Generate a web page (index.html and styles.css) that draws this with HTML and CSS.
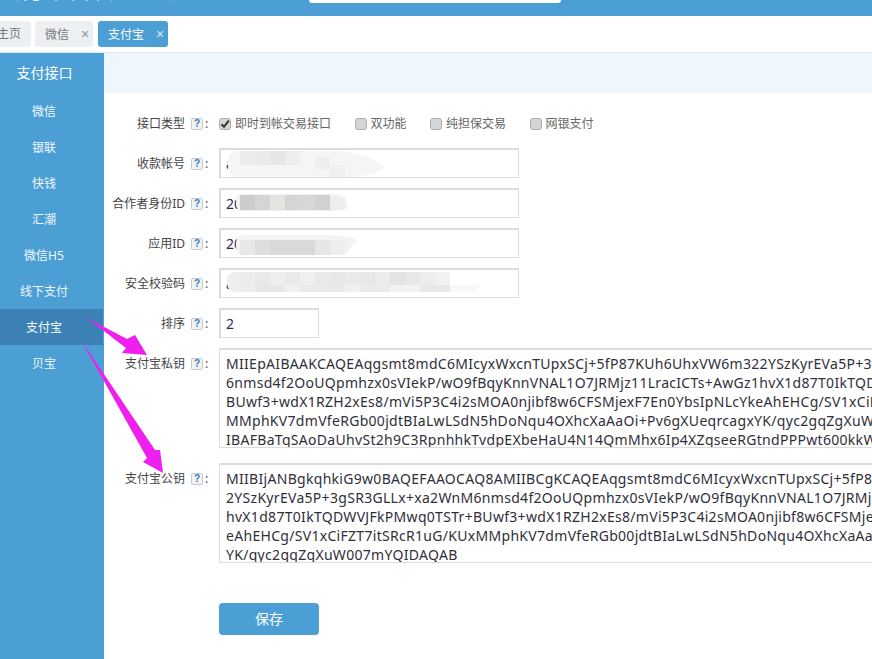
FILE: index.html
```html
<!DOCTYPE html>
<html lang="zh-CN">
<head>
<meta charset="utf-8">
<title>支付宝</title>
<link rel="stylesheet" href="styles.css">
</head>
<body>
<header class="topbar">
  <div class="brand">支付平台管理系统</div>
  <div class="search"></div>
</header>
<nav class="tabs">
  <div class="tab tab-home">主页</div>
  <div class="tab">微信<span class="tab-close">×</span></div>
  <div class="tab tab-active">支付宝<span class="tab-close">×</span></div>
</nav>
<div class="layout">
  <aside class="sidebar">
    <div class="side-title">支付接口</div>
    <a class="side-item">微信</a>
    <a class="side-item">银联</a>
    <a class="side-item">快钱</a>
    <a class="side-item">汇潮</a>
    <a class="side-item">微信H5</a>
    <a class="side-item">线下支付</a>
    <a class="side-item side-active">支付宝</a>
    <a class="side-item">贝宝</a>
  </aside>
  <main class="content">
    <div class="stripe"></div>
    <form class="form">
      <div class="row">
        <div class="label">接口类型<span class="help">?</span><span class="colon">:</span></div>
        <div class="checks">
          <label class="check"><span class="box"><svg viewBox="0 0 12 12" width="12" height="12"><path d="M2.5 6.2 5 8.8 9.8 2.6" fill="none" stroke="#333" stroke-width="2"/></svg></span>即时到帐交易接口</label>
          <label class="check"><span class="box"></span>双功能</label>
          <label class="check"><span class="box"></span>纯担保交易</label>
          <label class="check"><span class="box"></span>网银支付</label>
        </div>
      </div>
      <div class="row">
        <div class="label">收款帐号<span class="help">?</span><span class="colon">:</span></div>
        <input class="field" value="a">
      </div>
      <div class="row">
        <div class="label">合作者身份ID<span class="help">?</span><span class="colon">:</span></div>
        <input class="field" value="2088">
      </div>
      <div class="row">
        <div class="label">应用ID<span class="help">?</span><span class="colon">:</span></div>
        <input class="field" value="2016">
      </div>
      <div class="row">
        <div class="label">安全校验码<span class="help">?</span><span class="colon">:</span></div>
        <input class="field" value="a">
      </div>
      <div class="row">
        <div class="label">排序<span class="help">?</span><span class="colon">:</span></div>
        <input class="field field-short" value="2">
      </div>
      <div class="row row-area">
        <div class="label">支付宝私钥<span class="help">?</span><span class="colon">:</span></div>
        <textarea class="area" wrap="off" readonly>MIIEpAIBAAKCAQEAqgsmt8mdC6MIcyxWxcnTUpxSCj+5fP87KUh6UhxVW6m322YSzKyrEVa5P+3gSR3
6nmsd4f2OoUQpmhzx0sVIekP/wO9fBqyKnnVNAL1O7JRMjz11LracICTs+AwGz1hvX1d87T0IkTQDWV
BUwf3+wdX1RZH2xEs8/mVi5P3C4i2sMOA0njibf8w6CFSMjexF7En0YbsIpNLcYkeAhEHCg/SV1xCiFZ
MMphKV7dmVfeRGb00jdtBIaLwLSdN5hDoNqu4OXhcXaAaOi+Pv6gXUeqrcagxYK/qyc2gqZgXuW007m
IBAFBaTqSAoDaUhvSt2h9C3RpnhhkTvdpEXbeHaU4N14QmMhx6Ip4XZgseeRGtndPPPwt600kkW0</textarea>
      </div>
      <div class="row row-area">
        <div class="label">支付宝公钥<span class="help">?</span><span class="colon">:</span></div>
        <textarea class="area" wrap="off" readonly>MIIBIjANBgkqhkiG9w0BAQEFAAOCAQ8AMIIBCgKCAQEAqgsmt8mdC6MIcyxWxcnTUpxSCj+5fP87KUh6
2YSzKyrEVa5P+3gSR3GLLx+xa2WnM6nmsd4f2OoUQpmhzx0sVIekP/wO9fBqyKnnVNAL1O7JRMjz11Lr
hvX1d87T0IkTQDWVJFkPMwq0TSTr+BUwf3+wdX1RZH2xEs8/mVi5P3C4i2sMOA0njibf8w6CFSMjexF7
eAhEHCg/SV1xCiFZT7itSRcR1uG/KUxMMphKV7dmVfeRGb00jdtBIaLwLSdN5hDoNqu4OXhcXaAaOi+P
YK/qyc2gqZgXuW007mYQIDAQAB</textarea>
      </div>
      <button class="save" type="button">保存</button>
    </form>
  </main>
</div>
<svg class="overlay" viewBox="0 0 872 659" width="872" height="659" aria-hidden="true">
  <g class="mosaic">
    <path d="M228 160q0-9 12-9h100q30 4 45 16q-10 10-45 10h-100q-12 0-12-9z" fill="#f5f5f5"/>
    <rect x="240" y="151" width="15" height="14" fill="#ececec"/><rect x="255" y="151" width="15" height="14" fill="#eaeaea"/><rect x="270" y="151" width="15" height="14" fill="#e6e6e6"/><rect x="285" y="151" width="15" height="14" fill="#eeeeee"/><rect x="315" y="157" width="15" height="12" fill="#eeeeee"/><rect x="330" y="165" width="15" height="12" fill="#f0f0f0"/>
    <path d="M236 202q0-8 6-8h95l10 8v6l-10 3h-95q-6 0-6-9z" fill="#f2f2f2"/>
    <rect x="240" y="195" width="15" height="15" fill="#cdcbcb"/><rect x="255" y="195" width="15" height="15" fill="#d4d6d5"/><rect x="270" y="195" width="15" height="15" fill="#e5e5e0"/><rect x="285" y="195" width="15" height="15" fill="#d2d6d7"/><rect x="300" y="195" width="15" height="15" fill="#d8d7d7"/><rect x="315" y="195" width="15" height="15" fill="#d0d1d1"/><rect x="330" y="197" width="15" height="13" fill="#eeeeee"/>
    <path d="M236 245q0-10 6-10h90q20 1 25 6l-12 14h-103q-6 0-6-10z" fill="#f3f3f3"/>
    <rect x="240" y="240" width="15" height="15" fill="#e8e8e6"/><rect x="255" y="240" width="15" height="15" fill="#dedede"/><rect x="270" y="240" width="45" height="15" fill="#d9d9d9"/><rect x="315" y="240" width="15" height="15" fill="#e6e6e8"/><rect x="330" y="240" width="15" height="15" fill="#eeeeee"/>
    <path d="M227 282q0-10 9-10h204v20h-204q-9 0-9-10z" fill="#eeeeee"/>
    <path d="M450 285h30l-6 7h-24z" fill="#f8f8f8"/>
    <rect x="240" y="272" width="15" height="13" fill="#ececea"/><rect x="255" y="272" width="15" height="13" fill="#ebe8e8"/><rect x="270" y="272" width="15" height="13" fill="#ecefee"/><rect x="285" y="272" width="15" height="13" fill="#eaeaea"/><rect x="300" y="272" width="15" height="13" fill="#efefef"/><rect x="315" y="272" width="15" height="13" fill="#e9e9e9"/><rect x="330" y="272" width="15" height="13" fill="#e8e8e8"/><rect x="345" y="272" width="15" height="13" fill="#eaeaea"/><rect x="360" y="272" width="15" height="13" fill="#e8e8e6"/><rect x="375" y="272" width="15" height="13" fill="#eaecef"/><rect x="390" y="272" width="15" height="13" fill="#e3e3e3"/><rect x="405" y="272" width="15" height="13" fill="#e8e8e8"/><rect x="420" y="272" width="15" height="13" fill="#ededed"/><rect x="435" y="272" width="15" height="13" fill="#f0f2f1"/>
    <rect x="255" y="285" width="30" height="7" fill="#e7e7e7"/><rect x="285" y="285" width="15" height="7" fill="#eff1f0"/><rect x="300" y="285" width="30" height="7" fill="#ebebe9"/><rect x="330" y="285" width="15" height="7" fill="#e7e9eb"/><rect x="345" y="285" width="15" height="7" fill="#eff1f1"/><rect x="360" y="285" width="30" height="7" fill="#eaecec"/><rect x="390" y="285" width="30" height="7" fill="#f2f2f0"/><rect x="420" y="285" width="30" height="7" fill="#e6e8ea"/>
  </g>
  <path class="arrow" d="M87 318 127 339 135 335 147 355 122 353 126 348Z"/>
  <path class="arrow" d="M81 340 155 450 160 450 163 473 143 462 147 458Z"/>
</svg>
</body>
</html>
```
FILE: styles.css
```css
* { box-sizing: border-box; }
html, body { margin: 0; height: 659px; overflow: hidden; }
body {
  position: relative;
  background: #fff;
  color: #333;
  font: 12px/1.4 "Noto Sans", "Noto Sans CJK SC", sans-serif;
}
.topbar {
  height: 16px;
  background: #4b9fd5;
  position: relative;
  overflow: hidden;
  display: flex;
}
.brand {
  margin: -28px 0 0 -4px;
  width: 312px;
  height: 32px;
  flex: none;
  color: #fff;
  font: 24px/32px "Noto Sans CJK SC", sans-serif;
  white-space: nowrap;
}
.search {
  width: 252px;
  height: 3px;
  background: #fff;
  border-radius: 0 0 6px 6px;
  flex: none;
  margin-left: 1px;
}
.tabs {
  height: 37px;
  border-bottom: 1px solid #dde6f2;
  display: flex;
  gap: 4px;
  padding-top: 5px;
  margin-left: -13px;
}
.tab {
  height: 26px;
  line-height: 26px;
  padding: 0 10px;
  background: #ecf0f3;
  color: #777;
  border-radius: 3px;
  white-space: nowrap;
}
.tab:has(.tab-close) { padding-right: 5px; }
.tab-active { background: #4b9fd5; color: #fff; margin-left: 1px; }
.tab-close {
  display: inline-block;
  width: 7px;
  margin-left: 12px;
  color: #8a9299;
  font: 14px/26px "Liberation Sans", sans-serif;
  text-align: center;
}
.tab-active .tab-close { color: #dcecf7; }
.layout { display: flex; height: 606px; }
.sidebar {
  width: 104px;
  flex: none;
  background: #4b9fd5;
  color: #fff;
}
.side-title {
  height: 40px;
  line-height: 40px;
  padding-right: 15px;
  text-align: center;
  font-size: 14px;
}
.side-item {
  display: block;
  width: 103px;
  height: 36px;
  line-height: 37px;
  padding-right: 15px;
  text-align: center;
  color: #f2f8fc;
}
.side-active { background: #3c81b6; color: #fff; }
.content { flex: 1; min-width: 0; }
.stripe { height: 40px; background: #eff6fe; }
.form { padding-top: 15px; }
.row { display: flex; margin-bottom: 10px; min-height: 30px; }
.row-area { margin-bottom: 15px; }
.label {
  width: 115px;
  flex: none;
  height: 30px;
  padding: 2px 9px 0 0;
  display: flex;
  justify-content: flex-end;
  align-items: center;
  color: #444;
  white-space: nowrap;
}
.help {
  width: 12px;
  height: 12px;
  margin-left: 6px;
  border: 1px solid #c9c9c9;
  border-radius: 2px;
  background: #f3f3f3;
  color: #2f7fc8;
  font: bold 10px/10px "Liberation Sans", sans-serif;
  text-align: center;
}
.colon { width: 5px; margin-left: 2px; text-align: left; }
.checks { display: flex; align-items: center; gap: 23.5px; height: 30px; padding-top: 2px; color: #666; }
.check { display: flex; align-items: center; gap: 4px; }
.box {
  width: 12px;
  height: 12px;
  border: 1px solid #aeaeae;
  border-radius: 3px;
  background: #d6d6d6;
  display: block;
}
.box svg { display: block; margin: -1px; }
.field {
  width: 300px;
  height: 30px;
  border-color: #dcdcdf;
  border-width: 2px 1px 1px 2px;
  border-style: solid;
  padding: 0 5px;
  outline: 0;
  color: #2c2c50;
  background: #fff;
  font: 14px "Noto Sans", sans-serif;
}
.field-short { width: 100px; }
.area {
  width: 800px;
  height: 100px;
  flex: none;
  border: 1px solid #dcdcdc;
  border-top-width: 2px;
  padding: 4px 6px 0;
  overflow: hidden;
  resize: none;
  outline: 0;
  color: #2f2f3a;
  background: #fff;
  font: 14px/19px "Noto Sans", sans-serif;
  letter-spacing: 0.3px;
  white-space: pre;
}
.save {
  display: block;
  margin: 40px 0 0 115px;
  padding: 0 0 2px;
  width: 100px;
  height: 32px;
  border: 0;
  border-radius: 4px;
  background: #4b9fd5;
  color: #fff;
  font: 14px "Noto Sans CJK SC", sans-serif;
}
.overlay { position: absolute; left: 0; top: 0; pointer-events: none; }
.arrow { fill: #ef1ff0; }
```
